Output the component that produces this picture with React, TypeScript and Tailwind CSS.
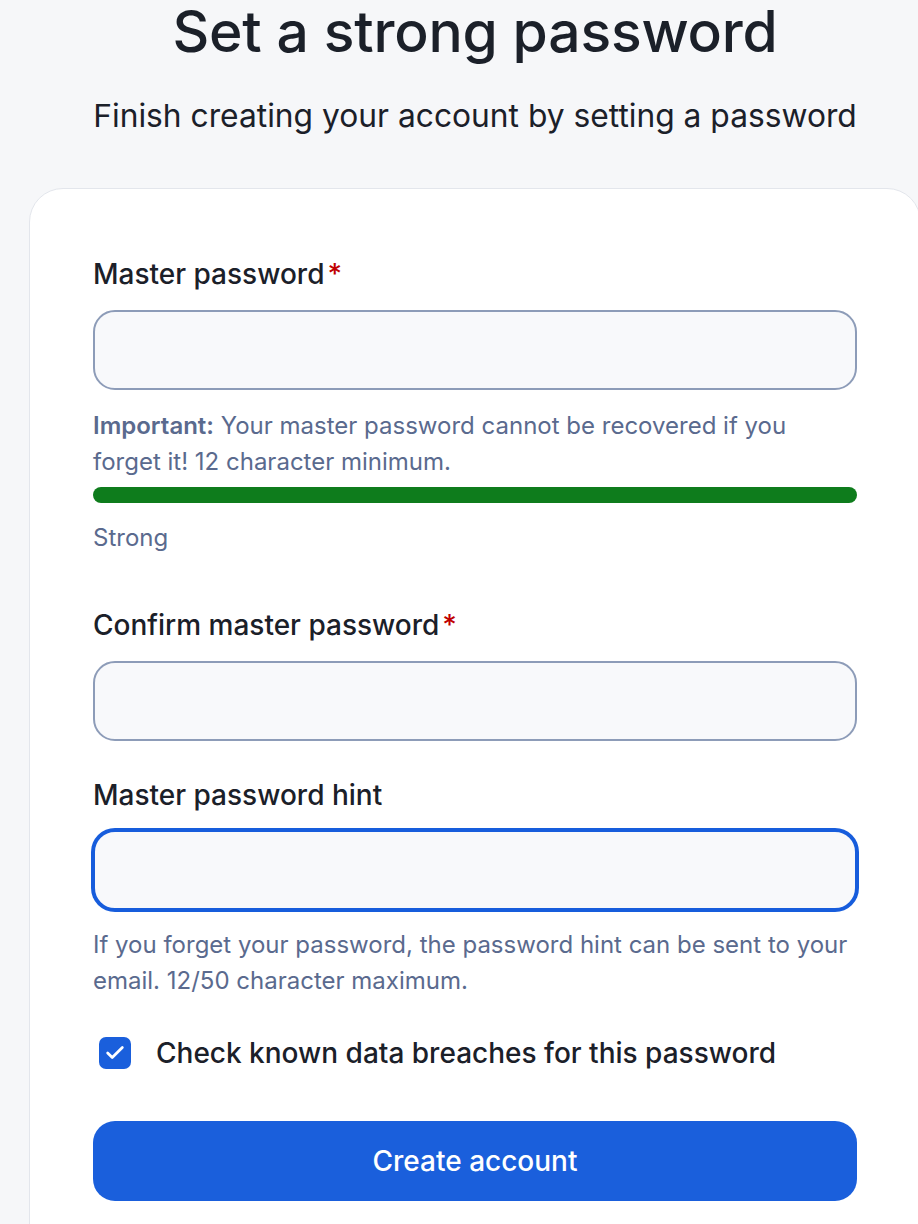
import { Check } from "lucide-react";

function Label({ text, required }: { text: string; required?: boolean }) {
  return (
    <label className="block text-[28px] leading-[36px] font-medium text-[#1b2029]">
      {text}
      {required && <span className="ml-[3px] text-[#c00000]">*</span>}
    </label>
  );
}

function Input({ focused }: { focused?: boolean }) {
  return (
    <div
      className={
        focused
          ? "h-[80px] rounded-[22px] border-2 border-[#175ddc] bg-[#f8f9fb] ring-2 ring-[#175ddc]"
          : "h-[80px] rounded-[22px] border-2 border-[#8d9cb8] bg-[#f8f9fb]"
      }
    />
  );
}

export default function App() {
  return (
    <main
      className="min-h-[1224px] w-[918px] overflow-hidden bg-[#f6f7f9] text-[#1b2029]"
      style={{ fontFamily: "Inter, 'Noto Sans', sans-serif" }}
    >
      <div className="ml-[29px] w-[892px]">
        <h1 className="pt-[1px] text-center text-[57px] leading-[62px] font-medium tracking-[-0.2px]">
          Set a strong password
        </h1>
        <p className="mt-[33px] text-center text-[31.75px] leading-[40px]">
          Finish creating your account by setting a password
        </p>

        <section className="mt-[52px] min-h-[1100px] rounded-t-[34px] border border-[#e3e6ec] bg-white px-[63px] pt-[67px]">
          <Label text="Master password" required />
          <div className="mt-[18px]">
            <Input />
          </div>
          <p className="mt-[18px] text-[24px] leading-[36px] text-[#5a6a8e]">
            <span className="font-semibold">Important:</span> Your master password cannot be
            recovered if you forget it! 12 character minimum.
          </p>
          <div className="mt-[7px] h-[16px] rounded-full bg-[#0e7c1c]" />
          <p className="mt-[17px] text-[24px] leading-[36px] text-[#5a6a8e]">Strong</p>

          <div className="mt-[51px]">
            <Label text="Confirm master password" required />
          </div>
          <div className="mt-[18px]">
            <Input />
          </div>

          <div className="mt-[36px]">
            <Label text="Master password hint" />
          </div>
          <div className="mt-[17px]">
            <Input focused />
          </div>
          <p className="mt-[17px] text-[24px] leading-[36px] text-[#5a6a8e]">
            If you forget your password, the password hint can be sent to your email. 12/50
            character maximum.
          </p>

          <div className="mt-[36px] flex items-center gap-[25px] pl-[6px]">
            <span className="flex size-[32px] items-center justify-center rounded-[7px] bg-[#1a5fdc]">
              <Check className="size-[22px] text-white" strokeWidth={3} />
            </span>
            <span className="text-[28px] leading-[36px] font-medium">
              Check known data breaches for this password
            </span>
          </div>

          <button className="mt-[50px] flex h-[80px] w-full items-center justify-center rounded-[22px] bg-[#1a5fdc] text-[28px] font-medium text-white">
            Create account
          </button>
        </section>
      </div>
    </main>
  );
}
